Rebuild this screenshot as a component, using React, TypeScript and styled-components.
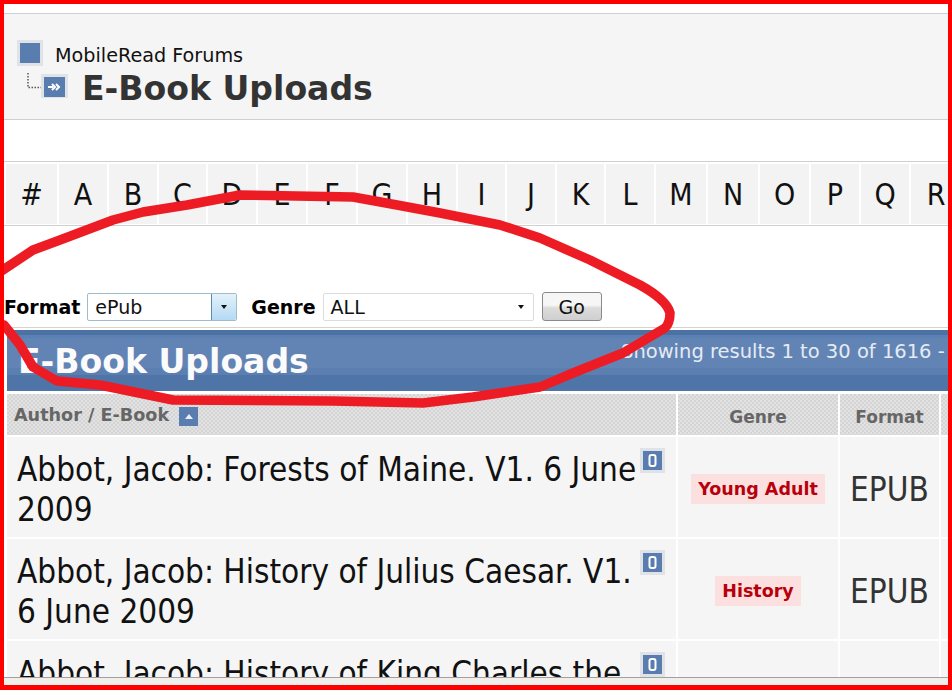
import React from "react";
import styled, { createGlobalStyle } from "styled-components";

const Global = createGlobalStyle`
  html, body { margin: 0; padding: 0; background: #fff; }
  body { font-family: "DejaVu Sans", Verdana, sans-serif; }
`;
const Page = styled.div`
  position: relative; width: 952px; height: 690px; overflow: hidden; background: #fff;
  border: 4px solid #f00; border-bottom-width: 5px; box-sizing: border-box;
  display: flex; flex-direction: column;
`;
const Viewport = styled.div`
  width: 1100px; flex: 1; min-height: 0; overflow: hidden; padding-top: 9px; box-sizing: border-box;
`;
const Footer = styled.div`
  height: 8px; background: #f1efec; border-top: 1px solid #a0a0a0; box-sizing: border-box;
`;
const Head = styled.header`
  height: 107px; box-sizing: border-box; background: #f5f5f5;
  border-top: 1px solid #cfcfcf; border-bottom: 1px solid #cfcfcf;
  padding: 26px 0 0 13px;
`;
const CrumbRow = styled.div`
  display: flex; align-items: center; height: 26px; gap: 12px;
  font-size: 19.2px; color: #111;
  span:last-child { padding-top: 5px; }
`;
const HomeIcon = styled.span`
  display: block; width: 26px; height: 26px; box-sizing: border-box;
  border: 3px solid #dfe3e8; background: #5a7db0;
`;
const TitleRow = styled.div`
  display: flex; align-items: center; height: 36px; margin-left: 10px;
`;
const Title = styled.h1`
  margin: 9px 0 0 13px; font-size: 33.1px; line-height: 34px; font-weight: 700; color: #333; white-space: nowrap;
`;
const Gap = styled.div`height: 41px;`;
const Alpha = styled.nav`
  height: 65px; box-sizing: border-box; display: flex; gap: 2px; padding: 2px 0 0 2px;
  border-top: 1px solid #cfcfcf; border-bottom: 1px solid #cfcfcf;
`;
const Letter = styled.div<{ $w: number }>`
  width: ${(p) => p.$w}px; height: 60px; flex: none; background: #f3f3f3;
  display: flex; align-items: center; justify-content: center;
  font-family: "DejaVu Sans Condensed", "DejaVu Sans", sans-serif; font-stretch: condensed; font-size: 30px; color: #111;
`;
const FormRow = styled.form`
  height: 102px; box-sizing: border-box; padding: 66px 0 0 0; display: flex; align-items: flex-start;
  border-bottom: 1px solid #d8d4cc;
`;
const Label = styled.label`
  font-size: 19px; font-weight: 700; color: #000; line-height: 30px; margin-right: 7px;
`;
const Select = styled.div<{ $w: number; $hot?: boolean }>`
  width: ${(p) => p.$w}px; height: 28px; box-sizing: border-box; display: flex; align-items: center;
  border: 1px solid ${(p) => (p.$hot ? "#9fbccb" : "#dcdcdc")}; border-radius: 2px; background: #fff;
  margin-top: 1px; margin-right: 14px; padding-left: 7px; font-size: 19px; color: #111; position: relative;
`;
const Arrow = styled.span<{ $hot?: boolean }>`
  position: absolute; right: 0; top: 0; bottom: 0; width: ${(p) => (p.$hot ? 25 : 24)}px;
  display: flex; align-items: center; justify-content: center;
  ${(p) => p.$hot && "background: linear-gradient(#e4f2fb, #b4d9f3); border-left: 1px solid #5a8ba8; box-sizing: border-box; border-radius: 0 2px 2px 0;"}
  &::after { content: ""; border: 3.5px solid transparent; border-top: 4px solid #111; border-bottom: 0; }
`;
const GoButton = styled.button`
  width: 60px; height: 29px; margin: 0 0 0 -6px; padding: 0; font: 19px "DejaVu Sans", sans-serif; color: #111;
  border: 1px solid #8a8a8a; border-radius: 3px; background: linear-gradient(#f6f6f6 0 45%, #dcdcdc 55%, #cfcfcf);
`;
const TitleBar = styled.div`
  margin: 2px 0 0 3px; height: 61px; box-sizing: border-box; position: relative;
  background: linear-gradient(#4c71a3 0 5px, #5b80b3 5px 8px, #6284b5 8px 38px, #5c7fb1 38px 45px, #4e74a8 45px);
  display: flex; align-items: center; padding: 2px 0 0 11px; color: #fff;
`;
const BarTitle = styled.h2`
  margin: 0; font-size: 33.1px; font-weight: 700; white-space: nowrap; color: #fbfbfb;
`;
const Showing = styled.span`
  position: absolute; left: 614px; top: 10px; font-size: 19.5px; color: #e6ebf3; white-space: nowrap;
`;
const Table = styled.div`
  margin: 3px 0 0 3px; display: grid; grid-template-columns: 669px 160px 99px 60px; column-gap: 2px; row-gap: 2px;
`;
const Th = styled.div<{ $center?: boolean }>`
  height: 41px; box-sizing: border-box; font-size: ${(p) => (p.$center ? 17 : 17.6)}px; font-weight: 700; color: #666;
  background-color: #dcdcdc;
  background-image: repeating-conic-gradient(#d4d4d4 0 25%, #e2e2e2 0 50%);
  background-size: 4px 4px;
  display: flex; align-items: center; gap: 10px; padding-left: ${(p) => (p.$center ? 0 : 7)}px;
  justify-content: ${(p) => (p.$center ? "center" : "flex-start")};
  padding-top: ${(p) => (p.$center ? 5 : 0)}px;
`;
const SortIcon = styled.span`
  width: 19px; height: 19px; background: #5a7db0; display: flex; align-items: center; justify-content: center;
  margin-top: 3px;
  &::after { content: ""; border: 4px solid transparent; border-bottom: 5px solid #eef; border-top: 0; }
`;
const Cell = styled.div`
  height: 100px; box-sizing: border-box; background: #f5f5f5; position: relative;
  font-family: "DejaVu Sans Condensed", "DejaVu Sans", sans-serif; font-stretch: condensed; color: #111;
`;
const BookCell = styled(Cell)`
  padding: 13px 0 0 10px;
  font-size: 33px; line-height: 40px;
`;
const BookName = styled.div`width: 630px;`;
const Clip = styled.span`
  position: absolute; right: 11px; top: 11px; width: 25px; height: 25px; box-sizing: border-box;
  border: 3px solid #dfe3e8; background: #5a7db0; display: flex; align-items: center; justify-content: center;
`;
const CenterCell = styled(Cell)`
  display: flex; align-items: center; justify-content: center; padding-top: 4px;
`;
const Badge = styled.span`
  background: #fce0e0; color: #b8000c; font: 700 17.5px/30px "DejaVu Sans", sans-serif; padding: 0 7px;
`;
const Fmt = styled.span`
  font-size: 33px; color: #333;
`;
const Scribble = styled.svg`
  position: absolute; left: -4px; top: -4px; pointer-events: none;
`;

const letters: [string, number][] = [
  ["#", 51], ["A", 48], ["B", 48], ["C", 47], ["D", 48], ["E", 48], ["F", 48], ["G", 48], ["H", 48], ["I", 47],
  ["J", 48], ["K", 47], ["L", 48], ["M", 50], ["N", 50], ["O", 49], ["P", 48], ["Q", 48], ["R", 50],
];
const rows = [
  ["Abbot, Jacob: Forests of Maine. V1. 6 June 2009", "Young Adult", "EPUB"],
  ["Abbot, Jacob: History of Julius Caesar. V1. 6 June 2009", "History", "EPUB"],
  ["Abbot, Jacob: History of King Charles the", "", ""],
];

export default function App() {
  return (
    <Page>
      <Global />
      <Viewport>
        <Head>
          <CrumbRow>
            <HomeIcon />
            <span>MobileRead Forums</span>
          </CrumbRow>
          <TitleRow>
            <svg width="42" height="28" viewBox="0 0 42 28">
              <path d="M1 3V17.5H17" fill="none" stroke="#555" strokeWidth="1.5" strokeDasharray="1.5 1.5" />
              <rect x="15.5" y="5.5" width="24" height="23" fill="#5a7db0" stroke="#dfe3e8" strokeWidth="3" />
              <path d="M21 17h5M25 14l3 3-3 3M29 14l3 3-3 3" fill="none" stroke="#fff" strokeWidth="2" />
            </svg>
            <Title>E-Book Uploads</Title>
          </TitleRow>
        </Head>
        <Gap />
        <Alpha>
          {letters.map(([l, w]) => (
            <Letter key={l} $w={w}>{l}</Letter>
          ))}
        </Alpha>
        <FormRow>
          <Label>Format</Label>
          <Select $w={150} $hot>ePub<Arrow $hot /></Select>
          <Label>Genre</Label>
          <Select $w={211}>ALL<Arrow /></Select>
          <GoButton type="button">Go</GoButton>
        </FormRow>
        <TitleBar>
          <BarTitle>E-Book Uploads</BarTitle>
          <Showing>Showing results 1 to 30 of 1616 - </Showing>
        </TitleBar>
        <Table>
          <Th>Author / E-Book <SortIcon /></Th>
          <Th $center>Genre</Th>
          <Th $center>Format</Th>
          <Th />
          {rows.map(([name, genre, fmt]) => (
            <React.Fragment key={name}>
              <BookCell>
                <BookName>{name}</BookName>
                <Clip>
                  <svg width="9" height="13" viewBox="0 0 9 13">
                    <rect x="1.5" y="1" width="6" height="11" rx="2" fill="none" stroke="#fff" strokeWidth="2" />
                  </svg>
                </Clip>
              </BookCell>
              <CenterCell>{genre && <Badge>{genre}</Badge>}</CenterCell>
              <CenterCell>{fmt && <Fmt>{fmt}</Fmt>}</CenterCell>
              <Cell />
            </React.Fragment>
          ))}
        </Table>
      </Viewport>
      <Footer />
      <Scribble width="952" height="690" viewBox="0 0 952 690">
        <path
          d="M0 272L33 250L60 240L113 220L143 212L187 205L240 195L353 197L397 205L440 213L500 225L540 238L590 260L640 285C658 295 668 305 670 313C670 320 668 325 665 328L623 353L573 373L540 387L473 397L423 403L333 401L173 400L100 385L57 381L33 367L20 345L4 325"
          fill="none" stroke="#ed1c24" strokeWidth="9.5" strokeLinejoin="round" strokeLinecap="round"
        />
      </Scribble>
    </Page>
  );
}
